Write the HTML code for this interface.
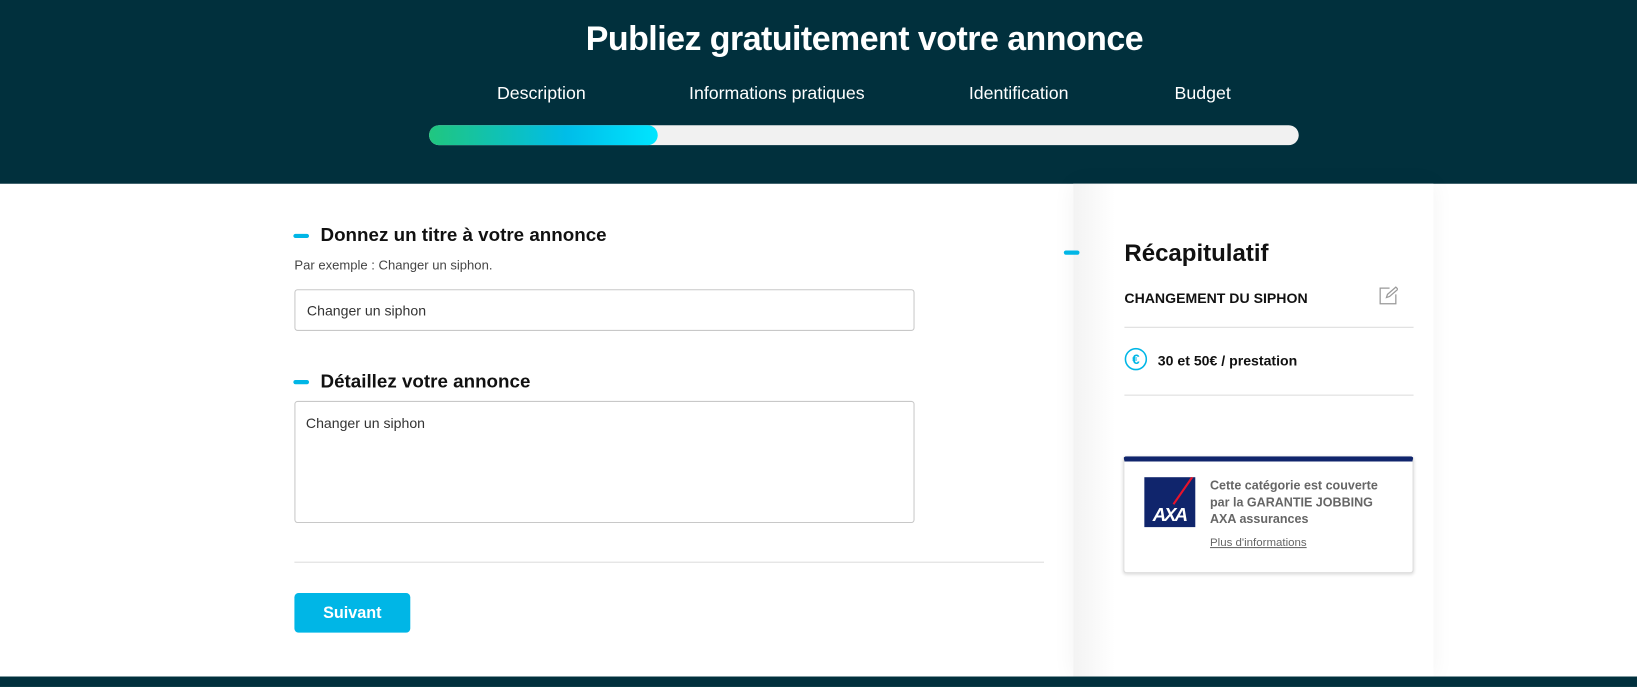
<!DOCTYPE html>
<html><head><meta charset="utf-8"><style>
*{box-sizing:border-box;margin:0;padding:0}
body{width:1637px;height:684px;overflow:hidden;background:#fff;font-family:"Liberation Sans",sans-serif;color:#111}
#w{position:absolute;left:0;top:0;width:1568px;height:655px;transform:scale(1.044);transform-origin:0 0}
.hdr{position:absolute;left:0;top:0;width:1568px;height:176px;background:#01303d}
.hdr h1{position:absolute;top:19px;left:0;width:1656px;text-align:center;color:#fff;font-size:32.5px;font-weight:bold;letter-spacing:-0.5px}
.step{position:absolute;top:80px;color:#fff;font-size:17px}
.bar{position:absolute;left:411px;top:120px;width:833px;height:19px;background:#f1f1f1;border-radius:10px}
.fill{position:absolute;left:411px;top:120px;width:219px;height:19px;border-radius:10px;background:linear-gradient(90deg,#20c67f,#00bde8 60%,#00e5ff)}
.foot{position:absolute;left:0;top:648px;width:1568px;height:10px;background:#01303d}
.side{position:absolute;left:1028px;top:176px;width:345px;height:472px;background:linear-gradient(90deg,#f3f3f3,#fff 40px);box-shadow:0 0 20px rgba(0,0,0,.05)}
.dash{position:absolute;width:15px;height:4px;border-radius:2px;background:#00b6e6}
.t{position:absolute;font-size:18px;font-weight:bold}
.s{position:absolute;font-size:12.5px;color:#444}
.inp{position:absolute;border:1px solid #c8c8c8;border-radius:3px;font-size:13.5px;color:#333}
.hr{position:absolute;height:1px;background:#dcdcdc}
</style></head><body><div id="w">
<div class="hdr">
<h1>Publiez gratuitement votre annonce</h1>
<div class="step" style="left:476px">Description</div>
<div class="step" style="left:660px">Informations pratiques</div>
<div class="step" style="left:928px">Identification</div>
<div class="step" style="left:1125px">Budget</div>
</div>
<div class="bar"></div><div class="fill"></div>

<div class="dash" style="left:281px;top:224px"></div>
<div class="t" style="left:307px;top:215px">Donnez un titre à votre annonce</div>
<div class="s" style="left:282px;top:247px">Par exemple : Changer un siphon.</div>
<div class="inp" style="left:282px;top:277px;width:594px;height:40px;padding:12px 11px">Changer un siphon</div>
<div class="dash" style="left:281px;top:364px"></div>
<div class="t" style="left:307px;top:355px">Détaillez votre annonce</div>
<div class="inp" style="left:282px;top:384px;width:594px;height:117px;padding:13px 10px">Changer un siphon</div>
<div class="hr" style="left:282px;top:538px;width:718px"></div>
<div style="position:absolute;left:282px;top:568px;width:111px;height:38px;background:#00b6e6;border-radius:4px;color:#fff;font-weight:bold;font-size:15.5px;text-align:center;line-height:39px">Suivant</div>

<div class="side"></div>
<div class="dash" style="left:1019px;top:240px"></div>
<div class="t" style="left:1077px;top:229px;font-size:23px">Récapitulatif</div>
<div style="position:absolute;left:1077px;top:278px;font-size:13.5px;font-weight:bold">CHANGEMENT DU SIPHON</div>
<svg style="position:absolute;left:1321px;top:274px" width="18" height="18" viewBox="0 0 18 18" fill="none" stroke="#999" stroke-width="1.2"><path d="M10 2H1v15h15V8"/><path d="M7 11l1-3 8-7 2 2-8 7z"/></svg>
<div class="hr" style="left:1077px;top:313px;width:277px"></div>
<svg style="position:absolute;left:1077px;top:333px" width="22" height="22" viewBox="0 0 22 22"><circle cx="11" cy="11" r="10" fill="none" stroke="#00b6e6" stroke-width="1.5"/><text x="11" y="15.5" text-anchor="middle" font-size="13" font-weight="bold" fill="#00b6e6" font-family="Liberation Sans">€</text></svg>
<div style="position:absolute;left:1109px;top:338px;font-size:13.5px;font-weight:bold">30 et 50€ / prestation</div>
<div class="hr" style="left:1077px;top:378px;width:277px"></div>
<div style="position:absolute;left:1076px;top:437px;width:278px;height:112px;background:#fff;border:1px solid #ddd;border-top:5px solid #10256c;border-radius:3px;box-shadow:0 1px 3px rgba(0,0,0,.15)"></div>
<svg style="position:absolute;left:1096px;top:457px" width="49" height="48" viewBox="0 0 49 48"><rect width="49" height="48" fill="#10256c"/><path d="M28 26L46 0" stroke="#e8132b" stroke-width="2"/><text x="24" y="42" text-anchor="middle" font-size="18" font-weight="bold" fill="#fff" font-family="Liberation Sans" letter-spacing="-2" font-style="italic">AXA</text></svg>
<div style="position:absolute;left:1159px;top:457px;font-size:12px;font-weight:bold;color:#666;line-height:16px">Cette catégorie est couverte<br>par la GARANTIE JOBBING<br>AXA assurances</div>
<div style="position:absolute;left:1159px;top:514px;font-size:11px;color:#666;text-decoration:underline">Plus d'informations</div>
<div class="foot"></div>
</div></body></html>
